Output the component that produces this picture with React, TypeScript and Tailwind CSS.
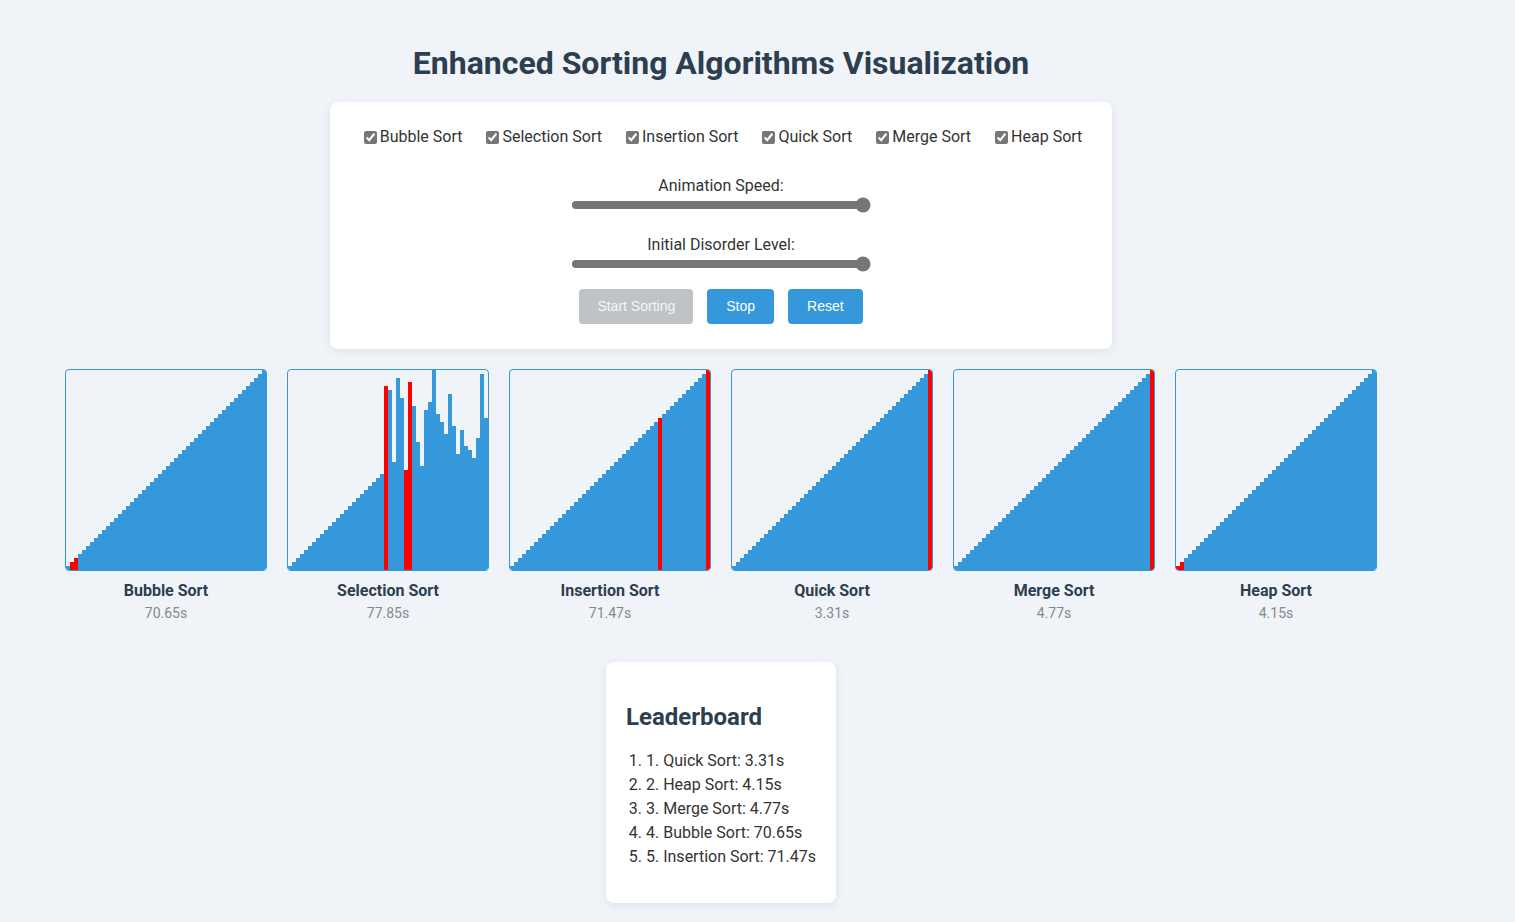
import React from "react";

type Algo = { name: string; time: string; values: number[]; red: number[] };

const sorted = Array.from({ length: 50 }, (_, i) => i + 1);

// selection sort is mid-run: first 24 in place, the rest still shuffled
const selectionValues = [
  ...sorted.slice(0, 24),
  46, 45, 27, 48, 43, 25, 47, 41, 32, 26, 40, 42, 50, 39, 37, 34, 44, 36, 29, 35, 31, 30, 28, 33, 49, 38,
];

const algos: Algo[] = [
  { name: "Bubble Sort", time: "70.65s", values: sorted, red: [1, 2] },
  { name: "Selection Sort", time: "77.85s", values: selectionValues, red: [24, 29, 30] },
  { name: "Insertion Sort", time: "71.47s", values: sorted, red: [37, 49] },
  { name: "Quick Sort", time: "3.31s", values: sorted, red: [49] },
  { name: "Merge Sort", time: "4.77s", values: sorted, red: [49] },
  { name: "Heap Sort", time: "4.15s", values: sorted, red: [0, 1] },
];

const leaderboard = [
  "1. Quick Sort: 3.31s",
  "2. Heap Sort: 4.15s",
  "3. Merge Sort: 4.77s",
  "4. Bubble Sort: 70.65s",
  "5. Insertion Sort: 71.47s",
];

function Bars({ algo }: { algo: Algo }) {
  return (
    <div className="w-[202px] h-[202px] border border-[#3498db] rounded-[4px] overflow-hidden bg-[#f0f4f8] flex items-end">
      {algo.values.map((v, i) => (
        <div
          key={i}
          className={algo.red.includes(i) ? "w-[4px] shrink-0 bg-[#ff0000]" : "w-[4px] shrink-0 bg-[#3498db]"}
          style={{ height: v * 4 }}
        />
      ))}
    </div>
  );
}

export default function App() {
  return (
    <div className="min-h-screen bg-[#f0f4f8] font-['Roboto',sans-serif] text-[#333]">
      <div className="w-[1442px] flex flex-col items-center">
        <h1 className="mt-[44px] text-[32px] leading-[38px] font-bold text-[#2c3e50]">
          Enhanced Sorting Algorithms Visualization
        </h1>

        <div className="mt-[20px] w-[782px] bg-white rounded-[8px] shadow-[0_2px_10px_rgba(0,0,0,0.08)] pt-[20px] pb-[25px] px-[20px] flex flex-col items-center">
          <div className="mt-[1px] h-[28px] flex items-center justify-center whitespace-nowrap">
            {algos.map((a) => (
              <label key={a.name} className="mx-[10px] flex items-center text-[16px] text-[#333] whitespace-nowrap">
                <input
                  type="checkbox"
                  defaultChecked
                  className="ml-[4px] mr-[3px] w-[13px] h-[13px] accent-[#767676]"
                />
                {a.name}
              </label>
            ))}
          </div>

          <div className="mt-[23px] flex flex-col items-center">
            <span className="text-[16px] leading-[23px]">Animation Speed:</span>
            <input type="range" min={1} max={100} defaultValue={100} className="w-[300px] h-[16px] accent-[#767676]" />
          </div>

          <div className="mt-[20px] flex flex-col items-center">
            <span className="text-[16px] leading-[23px]">Initial Disorder Level:</span>
            <input type="range" min={0} max={100} defaultValue={100} className="w-[300px] h-[16px] accent-[#767676]" />
          </div>

          <div className="mt-[17px] flex gap-[14px] font-['Liberation_Sans',Arial,sans-serif] text-[14px]">
            <button className="h-[35px] px-[18px] rounded-[4px] bg-[#bdc3c7] text-[#f4f6f7]" disabled>
              Start Sorting
            </button>
            <button className="h-[35px] px-[19px] rounded-[4px] bg-[#3498db] text-white">Stop</button>
            <button className="h-[35px] px-[19px] rounded-[4px] bg-[#3498db] text-white">Reset</button>
          </div>
        </div>

        <div className="mt-[20px] w-full flex justify-center">
          {algos.map((a) => (
            <div key={a.name} className="mx-[10px] flex flex-col items-center">
              <Bars algo={a} />
              <div className="mt-[8px] text-[16px] leading-[24px] font-bold text-[#2c3e50]">{a.name}</div>
              <div className="text-[14px] leading-[20px] text-[#7f8c8d]">{a.time}</div>
            </div>
          ))}
        </div>

        <div className="mt-[39px] mb-[20px] w-[230px] bg-white rounded-[8px] shadow-[0_2px_10px_rgba(0,0,0,0.08)] px-[20px] pt-[39px] pb-[34px]">
          <h3 className="text-[24px] leading-[32px] font-bold text-[#2c3e50]">Leaderboard</h3>
          <ol className="mt-[16px] pl-[20px] list-decimal text-[16px] leading-[24px] text-[#333]">
            {leaderboard.map((l) => (
              <li key={l}>{l}</li>
            ))}
          </ol>
        </div>
      </div>
    </div>
  );
}
